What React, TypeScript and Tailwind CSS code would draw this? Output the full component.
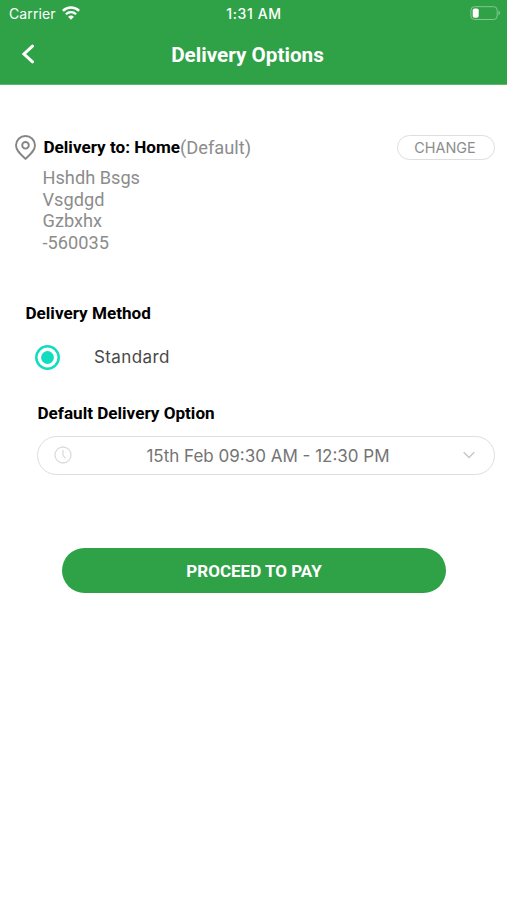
import { useState } from "react";

const address = ["Hshdh Bsgs", "Vsgdgd", "Gzbxhx", "-560035"];

function StatusBar() {
  return (
    <div className="grid h-7 grid-cols-3 items-center pl-[9px] pr-[6px] font-['Inter',sans-serif] text-[14px] leading-7">
      <div className="flex items-center gap-[6px]">
        <span className="tracking-[0.1px]">Carrier</span>
        <svg className="-mt-[2px]" width="18" height="14" viewBox="0 0 18 14" fill="none">
          <path d="M0.9 4.9a11.6 11.6 0 0 1 16.2 0" stroke="white" strokeWidth="2.5" />
          <path d="M3.9 8.2a7.3 7.3 0 0 1 10.2 0" stroke="white" strokeWidth="2.3" />
          <path d="M9 13.8 6.1 10.8a4.2 4.2 0 0 1 5.8 0Z" fill="white" />
        </svg>
      </div>
      <span className="-ml-[2px] whitespace-nowrap text-center text-[14px] font-medium tracking-[0.6px]">
        1:31 AM
      </span>
      <svg className="-mt-[2px] justify-self-end" width="31" height="14" viewBox="0 0 31 14" fill="none">
        <rect x="0.9" y="0.7" width="26.3" height="12.8" rx="3.5" stroke="#83c98f" />
        <rect x="2.7" y="2.4" width="6" height="9.4" rx="1.8" fill="white" />
        <path d="M28.5 4.8c2 .6 2 3.8 0 4.4Z" fill="#83c98f" />
      </svg>
    </div>
  );
}

export default function App() {
  const [standard, setStandard] = useState(true);

  return (
    <div className="min-h-screen bg-white font-['Roboto',sans-serif]">
      <header className="h-[85px] border-b border-[#5fb570] bg-[#2fa147] text-white">
        <StatusBar />
        <div className="grid h-[54px] grid-cols-[60px_1fr_72px] items-center">
          <button className="-mt-[2px] ml-[22px] w-3">
            <svg width="12" height="20" viewBox="0 0 12 20" fill="none">
              <path
                d="M10.5 2.2 2 10 10.5 17.8"
                stroke="white"
                strokeWidth="3"
                strokeLinecap="round"
              />
            </svg>
          </button>
          <h1 className="pt-[2px] text-center text-[20.7px] font-bold">Delivery Options</h1>
        </div>
      </header>

      <main>
        <section className="pl-[15px] pr-3 pt-[49px]">
          <div className="flex h-[26px] items-center">
            <svg width="21" height="25" viewBox="0 0 21 25" fill="none" stroke="#858585" strokeWidth="1.9">
              <path d="M10.5 23.8C6.2 19.9 1 16 1 10.3a9.5 9.3 0 0 1 19 0c0 5.7-5.2 9.6-9.5 13.5Z" />
              <circle cx="10.5" cy="10.3" r="3.3" />
            </svg>
            <p className="ml-[7.5px] flex items-center whitespace-nowrap text-[18.3px] text-[#8c8c8c]">
              <span className="pt-[2px] text-[17.1px] font-bold text-black">Delivery to: Home</span>
              <span className="pt-[1px]">(Default)</span>
            </p>
            <button className="ml-auto h-[25px] w-[98px] rounded-full border-[1.5px] border-[#dedede] pr-[2px] pt-[2px] font-['Inter',sans-serif] text-[14.4px] leading-5 text-[#8c8c8c]">
              CHANGE
            </button>
          </div>
          <div className="ml-[27.5px] mt-[7px] text-[18.2px] leading-[21.7px] text-[#8c8c8c]">
            {address.map((line) => (
              <p key={line}>{line}</p>
            ))}
          </div>
        </section>

        <section className="mt-[47px] pl-[25.5px]">
          <h2 className="text-[17.1px] font-bold leading-6 text-black">Delivery Method</h2>
          <button
            onClick={() => setStandard(true)}
            className="ml-[9.5px] mt-5 flex h-[26px] items-center"
          >
            <svg width="25" height="25" viewBox="0 0 25 25" fill="none">
              <circle cx="12.5" cy="12.5" r="11.2" stroke="#12dcc0" strokeWidth="2.5" />
              {standard && <circle cx="12.5" cy="12.5" r="6.4" fill="#12dcc0" />}
            </svg>
            <span className="ml-[34px] font-['Inter',sans-serif] text-[17px] tracking-[0.4px] text-[#484848]">
              Standard
            </span>
          </button>
        </section>

        <section className="mt-[30px] pl-[37px] pr-3">
          <h2 className="ml-[0.5px] text-[17.1px] font-bold leading-6 text-black">
            Default Delivery Option
          </h2>
          <button className="mt-[11px] flex h-[39px] w-full items-center rounded-full border-[1.5px] border-[#dedede] pl-4 pr-[19px]">
            <svg width="18" height="18" viewBox="0 0 18 18" fill="none" stroke="#dcdcdc" strokeWidth="1.3">
              <circle cx="9" cy="9" r="8" />
              <path d="M9 4v5.3l2.5 3" />
            </svg>
            <span className="flex-1 whitespace-nowrap pl-[1px] pt-[2px] text-center font-['Inter',sans-serif] text-[17px] text-[#747474]">
              15th Feb 09:30 AM - 12:30 PM
            </span>
            <svg width="12" height="8" viewBox="0 0 12 8" fill="none" stroke="#c8c8c8" strokeWidth="1.5">
              <path d="m.7 1.2 5.3 5.3 5.3-5.3" />
            </svg>
          </button>
        </section>

        <button className="ml-[62px] mt-[73.5px] block h-[45px] w-[384px] rounded-full bg-[#2fa147] pt-[1px] text-[17px] font-bold text-white">
          PROCEED TO PAY
        </button>
      </main>
    </div>
  );
}
